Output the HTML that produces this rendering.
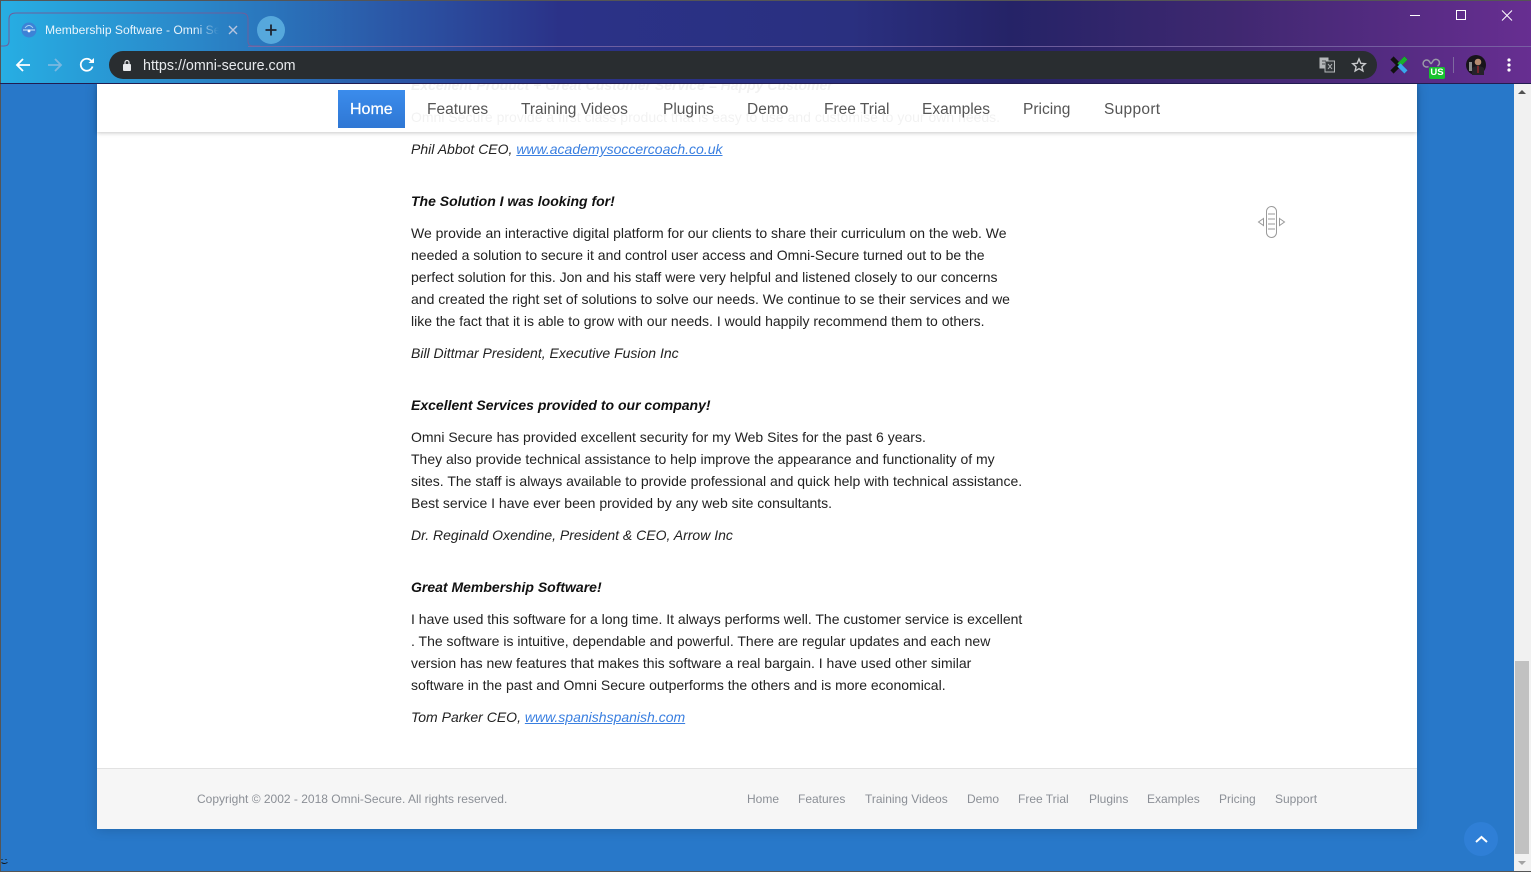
<!DOCTYPE html>
<html><head><meta charset="utf-8"><title>Membership Software - Omni Secure</title>
<style>
*{box-sizing:border-box}
html,body{margin:0;padding:0;width:1531px;height:872px;overflow:hidden;background:#2878c9;font-family:"Liberation Sans",sans-serif}
.a{position:absolute;white-space:nowrap}
#chrome{position:absolute;left:0;top:0;width:1531px;height:84px;z-index:5;background:linear-gradient(90deg,#27aee3 0,#2a86c8 200px,#2b55a5 400px,#2b3288 560px,#2a3080 850px,#252367 1010px,#3f2870 1230px,#672e91 1531px)}
.line{position:absolute;top:46px;height:1px;left:248px;right:0;background:#7d6aa8;opacity:.8}
#omni{position:absolute;left:109px;top:51px;width:1268px;height:28px;background:#292d30;border-radius:14px}
#page{position:absolute;left:97px;top:84px;width:1320px;height:745px;background:#fff;box-shadow:0 0 12px rgba(0,0,0,.18)}
#nav{position:absolute;left:97px;top:84px;width:1320px;height:48px;background:rgba(255,255,255,.94);box-shadow:0 1px 4px rgba(0,0,0,.22)}
.n{position:absolute;top:100px;font-size:15.5px;line-height:20px;color:#555;white-space:nowrap}
.t{position:absolute;left:411px;font-size:14px;line-height:22px;color:#222;white-space:nowrap}
.t.h{font-weight:bold;font-style:italic;color:#111}
.t.i{font-style:italic}
.t a{color:#3a7fe0;text-decoration:underline}
#foot{position:absolute;left:97px;top:768px;width:1320px;height:61px;background:#f6f6f6;border-top:1px solid #e2e2e2}
.f{position:absolute;top:792px;font-size:12px;line-height:14px;color:#8b8f96;white-space:nowrap}
#sb{position:absolute;left:1514px;top:84px;width:17px;height:788px;background:#f1f1f1}
</style></head><body>
<div id="page"></div>
<div class="t h" style="top:74px">Excellent Product + Great Customer Service = Happy Customer</div>
<div class="t" style="top:106px">Omni Secure provide a first class product that is easy to use and customise to your own needs.</div>
<div id="nav"></div>
<div id="chrome">
<svg class="a" style="left:0;top:0" width="260" height="50"><path d="M0 46H4Q9 46 9 41V19Q9 13 16 13H241Q248 13 248 19V41Q248 46 253 46H260" fill="none" stroke="#6d5f9c" stroke-width="1"/></svg>
<div class="line"></div>
<svg class="a" style="left:21px;top:22px" width="16" height="16"><circle cx="8" cy="8" r="7.5" fill="#3d82d6"/><path d="M2 8H14" stroke="#9cc8ee" stroke-width="1.5"/><path d="M4 6Q8 1 12 6" fill="none" stroke="#a5d0f2"/><circle cx="8" cy="9" r="1.4" fill="#fff"/></svg>
<div class="a" style="left:45px;top:22px;width:174px;overflow:hidden;font-size:12.1px;line-height:16px;color:#e8f3fb;-webkit-mask-image:linear-gradient(90deg,#000 150px,transparent 174px)">Membership Software - Omni Secure</div>
<svg class="a" style="left:228px;top:25px" width="10" height="10"><path d="M1 1L9 9M9 1L1 9" stroke="#b7c4de" stroke-width="1.4"/></svg>
<svg class="a" style="left:257px;top:16px" width="28" height="28"><circle cx="14" cy="14" r="14" fill="#56a8dc"/><path d="M14 8.5V19.5M8.5 14H19.5" stroke="#1d2430" stroke-width="1.8"/></svg>
<svg class="a" style="left:15px;top:57px" width="16" height="16"><path d="M15 8H2M8 2L2 8L8 14" fill="none" stroke="#fff" stroke-width="1.8"/></svg>
<svg class="a" style="left:47px;top:57px" width="16" height="16"><path d="M1 8H14M8 2L14 8L8 14" fill="none" stroke="#7ab8e0" stroke-width="1.8"/></svg>
<svg class="a" style="left:79px;top:57px" width="16" height="16"><path d="M13.5 9.5A6 6 0 1 1 12.3 3.8" fill="none" stroke="#fff" stroke-width="1.8"/><path d="M9.5 6H15V1Z" fill="#fff"/></svg>
<div id="omni"></div>
<svg class="a" style="left:122px;top:59px" width="10" height="12"><rect x="1" y="5" width="8" height="7" rx="1" fill="#e8eaed"/><path d="M3 5V3.5A2 2 0 0 1 7 3.5V5" fill="none" stroke="#e8eaed" stroke-width="1.2"/></svg>
<div class="a" style="left:143px;top:58px;font-size:14.3px;line-height:16px;color:#e8eaed">https://omni-secure.com</div>
<svg class="a" style="left:1319px;top:57px" width="16" height="16"><rect x="0.5" y="0.5" width="9" height="11" fill="#b5b8ba"/><rect x="6" y="4" width="9.5" height="11" fill="#33373a" stroke="#b5b8ba"/><path d="M3 4H7M3 7H6" stroke="#4a4d50"/><path d="M9 7L13 12M13 7L9 12" stroke="#b5b8ba"/></svg>
<svg class="a" style="left:1351px;top:57px" width="16" height="16"><path d="M8 2L9.8 6.3L14.3 6.7L10.9 9.7L11.9 14L8 11.7L4.1 14L5.1 9.7L1.7 6.7L6.2 6.3Z" fill="none" stroke="#c8cacc" stroke-width="1.4"/></svg>
<svg class="a" style="left:1390px;top:56px" width="18" height="18"><path d="M2 2L16 16" stroke="#111" stroke-width="4.5"/><path d="M2 16L16 2" stroke="#111" stroke-width="4.5"/><path d="M9 9L16 2" stroke="#18b02c" stroke-width="4.5"/><path d="M9 9L16 16" stroke="#3aa6ee" stroke-width="4.5"/></svg>
<svg class="a" style="left:1422px;top:58px" width="20" height="12"><path d="M6.5 8.5A3.5 3.5 0 1 1 7 3L9 6M9 6L11 3A3.5 3.5 0 1 1 15.5 8" fill="none" stroke="#9a9aa8" stroke-width="1.5"/></svg>
<div class="a" style="left:1429px;top:67px;width:16px;height:12px;border-radius:2px;background:#17c32e;color:#fff;font-size:9.5px;font-weight:bold;line-height:12px;text-align:center">US</div>
<div class="a" style="left:1453px;top:57px;width:1px;height:16px;background:#7e6aa0"></div>
<svg class="a" style="left:1466px;top:55px" width="20" height="20"><circle cx="10" cy="10" r="10" fill="#17141a"/><circle cx="12" cy="7" r="3.3" fill="#b58a70"/><path d="M6 20V13Q12 9 18 13V20Z" fill="#25222a"/><path d="M12 11V18" stroke="#a1262a" stroke-width="1.3"/><rect x="3" y="7" width="3" height="9" fill="#8c8c8c"/></svg>
<svg class="a" style="left:1506px;top:58px" width="6" height="14"><circle cx="3" cy="2" r="1.6" fill="#fff"/><circle cx="3" cy="7" r="1.6" fill="#fff"/><circle cx="3" cy="12" r="1.6" fill="#fff"/></svg>
<svg class="a" style="left:1410px;top:9px" width="110" height="14"><path d="M0 6.5H10" stroke="#fff"/><rect x="46.5" y="1.5" width="9" height="9" fill="none" stroke="#fff"/><path d="M92 1.5L102 11.5M102 1.5L92 11.5" stroke="#fff"/></svg>
</div>
<div class="a" style="left:0;top:0;width:1531px;height:1px;background:#555;z-index:6"></div>
<div class="a" style="left:0;top:0;width:1px;height:872px;background:#555;z-index:6"></div>
<div class="a" style="left:0;top:871px;width:1531px;height:1px;background:#555;z-index:6"></div>
<div class="a" style="left:0;top:83px;width:1531px;height:1px;background:#221c50;z-index:6"></div>

<div class="a" style="left:338px;top:90px;width:67px;height:38px;background:linear-gradient(#3b8cec,#2f77d4)"></div>
<div class="n" style="left:350px;color:#fff;font-size:16px;-webkit-text-stroke:.25px #fff">Home</div>
<div class="n" style="left:427px">Features</div>
<div class="n" style="left:521px">Training Videos</div>
<div class="n" style="left:663px">Plugins</div>
<div class="n" style="left:747px">Demo</div>
<div class="n" style="left:824px">Free Trial</div>
<div class="n" style="left:922px">Examples</div>
<div class="n" style="left:1023px">Pricing</div>
<div class="n" style="left:1104px;letter-spacing:.3px">Support</div>

<div class="t i" style="top:138px">Phil Abbot CEO, <a>www.academysoccercoach.co.uk</a></div>
<div class="t h" style="top:190px">The Solution I was looking for!</div>
<div class="t" style="top:222px">We provide an interactive digital platform for our clients to share their curriculum on the web. We</div>
<div class="t" style="top:244px">needed a solution to secure it and control user access and Omni-Secure turned out to be the</div>
<div class="t" style="top:266px">perfect solution for this. Jon and his staff were very helpful and listened closely to our concerns</div>
<div class="t" style="top:288px">and created the right set of solutions to solve our needs. We continue to se their services and we</div>
<div class="t" style="top:310px">like the fact that it is able to grow with our needs. I would happily recommend them to others.</div>
<div class="t i" style="top:342px">Bill Dittmar President, Executive Fusion Inc</div>
<div class="t h" style="top:394px">Excellent Services provided to our company!</div>
<div class="t" style="top:426px">Omni Secure has provided excellent security for my Web Sites for the past 6 years.</div>
<div class="t" style="top:448px">They also provide technical assistance to help improve the appearance and functionality of my</div>
<div class="t" style="top:470px">sites. The staff is always available to provide professional and quick help with technical assistance.</div>
<div class="t" style="top:492px">Best service I have ever been provided by any web site consultants.</div>
<div class="t i" style="top:524px">Dr. Reginald Oxendine, President &amp; CEO, Arrow Inc</div>
<div class="t h" style="top:576px">Great Membership Software!</div>
<div class="t" style="top:608px">I have used this software for a long time. It always performs well. The customer service is excellent</div>
<div class="t" style="top:630px">. The software is intuitive, dependable and powerful. There are regular updates and each new</div>
<div class="t" style="top:652px">version has new features that makes this software a real bargain. I have used other similar</div>
<div class="t" style="top:674px">software in the past and Omni Secure outperforms the others and is more economical.</div>
<div class="t i" style="top:706px">Tom Parker CEO, <a>www.spanishspanish.com</a></div>

<svg class="a" style="left:1257px;top:206px" width="29" height="32"><g fill="none" stroke="#9a9a9a"><rect x="9.5" y="0.5" width="10" height="31" rx="5"/><path d="M11 8H18M11 13H18M11 18H18M11 23H18"/><path d="M6.5 12.5L1.5 16L6.5 19.5Z"/><path d="M22.5 12.5L27.5 16L22.5 19.5Z"/></g></svg>

<div id="foot"></div>
<div class="f" style="left:197px">Copyright © 2002 - 2018 Omni-Secure. All rights reserved.</div>
<div class="f" style="left:747px">Home</div>
<div class="f" style="left:798px">Features</div>
<div class="f" style="left:865px">Training Videos</div>
<div class="f" style="left:967px">Demo</div>
<div class="f" style="left:1018px">Free Trial</div>
<div class="f" style="left:1089px">Plugins</div>
<div class="f" style="left:1147px">Examples</div>
<div class="f" style="left:1219px">Pricing</div>
<div class="f" style="left:1275px">Support</div>

<div class="a" style="left:1464px;top:822px;width:34px;height:34px;border-radius:50%;background:#2f7fd6"></div>
<svg class="a" style="left:1475px;top:835px" width="13" height="9"><path d="M1 7L6.5 2L12 7" fill="none" stroke="#fff" stroke-width="2"/></svg>
<svg class="a" style="left:1px;top:857px" width="8" height="8"><path d="M1 2V3M5 2V3M0.5 5.5Q3 7.5 6.5 5.5" fill="none" stroke="#111"/></svg>

<div id="sb"></div>
<div class="a" style="left:1515px;top:661px;width:14px;height:193px;background:#c1c1c1"></div>
<svg class="a" style="left:1518px;top:89px" width="9" height="6"><path d="M0 5H8L4 1Z" fill="#505050"/></svg>
<svg class="a" style="left:1518px;top:860px" width="9" height="6"><path d="M0 1H8L4 5Z" fill="#a3a3a3"/></svg>
</body></html>
